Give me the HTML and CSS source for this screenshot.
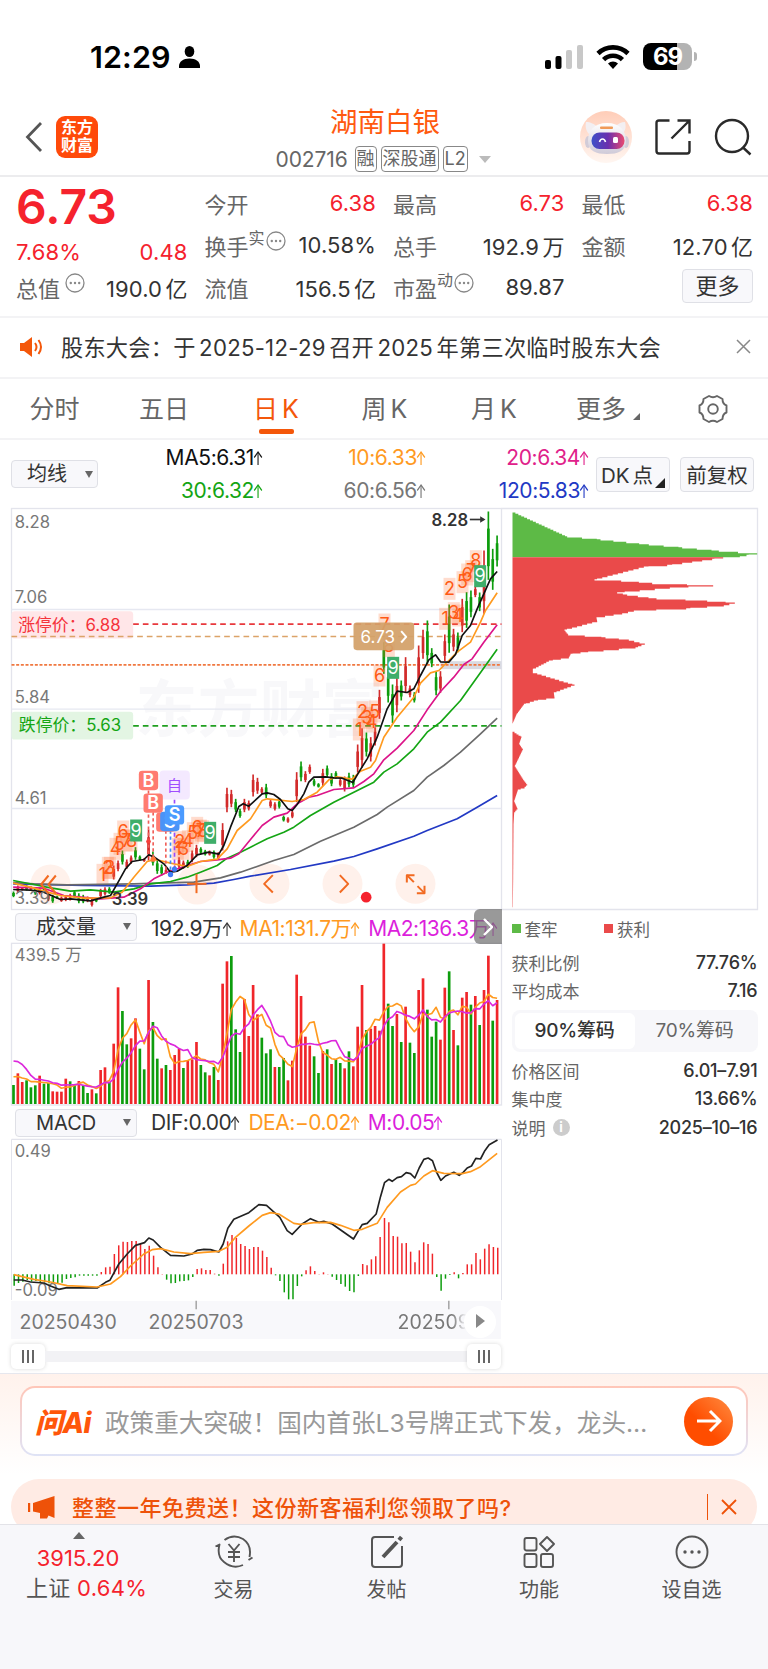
FILE: index.html
```html
<!DOCTYPE html>
<html lang="zh-CN">
<head>
    <meta charset="UTF-8">
    <meta name="viewport" content="width=device-width, initial-scale=1.0">
    <title>湖南白银 002716</title>
    <link rel="stylesheet" href="styles.css">
</head>
<body>
    <div class="status-bar">
        <div class="status-left">
            <span class="time">12:29</span>
            <svg width="21" height="22" viewBox="0 0 21 22"><ellipse cx="10.500" cy="5.500" rx="4.800" ry="5.500"/><path d="M0 22v-2c0-4 4-7.500 10.500-7.500S21 16 21 20v2z"/></svg>
        </div>
        <div class="status-right">
            <svg width="38" height="24" viewBox="0 0 38 24"><rect x="0" y="15" width="6" height="9" rx="2"/><rect x="10.500" y="11" width="6" height="13" rx="2"/><rect x="21" y="5" width="6" height="19" rx="2" fill="#c8c8c8"/><rect x="32" y="0" width="6" height="24" rx="2" fill="#c8c8c8"/></svg>
            <svg width="34" height="25" viewBox="0 0 34 25" fill="none" stroke="#000" stroke-width="4.600"><path d="M2 9.500a21.500 21.500 0 0 1 30 0"/><path d="M7.600 15.600a13.300 13.300 0 0 1 18.800 0"/><path d="M17 25l-5-5.500a7.500 7.500 0 0 1 10 0z" fill="#000" stroke="none"/></svg>
            <div class="battery"><span>69</span></div>
        </div>
    </div>

    <header class="header">
        <div class="header-left">
            <svg class="back" width="18" height="32" viewBox="0 0 18 32"><path d="M16 2L2.500 16 16 30" fill="none" stroke="#555" stroke-width="2.800"/></svg>
            <div class="logo">东方<br>财富</div>
        </div>
        <div class="header-title">
            <h1>湖南白银</h1>
            <div class="code"><span class="code-num">002716</span><span class="tag">融</span><span class="tag">深股通</span><span class="tag">L2</span><i class="caret"></i></div>
        </div>
        <div class="header-right">
            <svg class="robot" width="52" height="52" viewBox="0 0 52 52">
                <defs>
                    <linearGradient id="halo" x1="0" y1="0" x2="0" y2="1"><stop offset="0" stop-color="#ffcdb8"/><stop offset="1" stop-color="#fff6f1"/></linearGradient>
                    <linearGradient id="visor" x1="0" y1="0" x2="1" y2="0"><stop offset="0" stop-color="#3c50c8"/><stop offset=".5" stop-color="#6a2fae"/><stop offset="1" stop-color="#ea4a70"/></linearGradient>
                    <linearGradient id="head" x1="0" y1="0" x2="0" y2="1"><stop offset="0" stop-color="#fff"/><stop offset="1" stop-color="#cfcad8"/></linearGradient>
                </defs>
                <circle cx="26" cy="26" r="26" fill="url(#halo)"/>
                <path d="M6 11c4 0 9 2 11 5l-8 7c-3-3-4-8-3-12zM45 11c-4 0-7 2-9 4l7 7c3-3 3-7 2-11z" fill="#f3eff2"/>
                <ellipse cx="8" cy="31" rx="3" ry="6" fill="#d2ccd8"/><ellipse cx="46" cy="31" rx="3" ry="6" fill="#d2ccd8"/>
                <path d="M8 30c0-10 6-18 19-18s19 8 19 18-8 13-19 13S8 40 8 30z" fill="url(#head)"/>
                <rect x="20" y="15.500" width="13" height="2.500" rx="1" fill="#f09a58"/>
                <rect x="11.500" y="21.500" width="33" height="16.500" rx="8" fill="url(#visor)"/>
                <path d="M19.500 31c1-4 5-4 6 0" fill="none" stroke="#fff" stroke-width="1.600"/>
                <rect x="33" y="26" width="5" height="6" rx="1.500" fill="#fff"/>
            </svg>
            <svg width="36" height="36" viewBox="0 0 36 36" fill="none" stroke="#2a2a2a" stroke-width="2.400"><path d="M14.500 1.500H4Q1.500 1.500 1.500 4v28Q1.500 34.500 4 34.500h28q2.500 0 2.500-2.500V22M16.500 19.500L34 2M22.500 1.500h12v13"/></svg>
            <svg class="search" width="38" height="38" viewBox="0 0 38 38" fill="none" stroke="#2a2a2a" stroke-width="2.400"><circle cx="18" cy="18" r="16"/><path d="M28.500 29l8 7.500"/></svg>
        </div>
    </header>

    <section class="quote">
        <div class="quote-col">
            <div class="price">6.73</div>
            <div class="row change red"><span>7.68%</span><span>0.48</span></div>
            <div class="row"><span class="label">总值<svg class="dots" width="20" height="20" viewBox="0 0 20 20"><use href="#more-dots"/></svg></span><span>190.0 亿</span></div>
        </div>
        <div class="quote-col">
            <div class="row"><span class="label">今开</span><span class="red">6.38</span></div>
            <div class="row"><span class="label">换手<sup>实</sup><svg class="dots tight" width="20" height="20" viewBox="0 0 20 20"><use href="#more-dots"/></svg></span><span>10.58%</span></div>
            <div class="row"><span class="label">流值</span><span>156.5 亿</span></div>
        </div>
        <div class="quote-col">
            <div class="row"><span class="label">最高</span><span class="red">6.73</span></div>
            <div class="row"><span class="label">总手</span><span>192.9 万</span></div>
            <div class="row"><span class="label">市盈<sup>动</sup><svg class="dots tight" width="20" height="20" viewBox="0 0 20 20"><use href="#more-dots"/></svg></span><span>89.87</span></div>
        </div>
        <div class="quote-col">
            <div class="row"><span class="label">最低</span><span class="red">6.38</span></div>
            <div class="row"><span class="label">金额</span><span>12.70 亿</span></div>
            <div class="row more-row"><button class="btn more-btn">更多</button></div>
        </div>
    </section>

    <section class="notice">
        <svg width="23" height="20" viewBox="0 0 23 20"><path d="M0 6h4l8-6v20l-8-6H0z" fill="#f4570a"/><path d="M15 6q3 4 0 8M18.500 3q5 7 0 14" fill="none" stroke="#f4570a" stroke-width="2"/></svg>
        <p>股东大会：于 2025-12-29 召开 2025 年第三次临时股东大会</p>
        <svg width="15" height="15" viewBox="0 0 15 15"><path d="M1 1l13 13M14 1L1 14" stroke="#888" stroke-width="1.500"/></svg>
    </section>

    <nav class="tabs">
        <a>分时</a>
        <a>五日</a>
        <a class="active">日 K</a>
        <a>周 K</a>
        <a>月 K</a>
        <a class="has-corner">更多</a>
        <a class="gear"><svg width="30" height="30" viewBox="0 0 30 30" fill="none" stroke="#666" stroke-width="1.900" stroke-linejoin="round"><path d="M11 2q4 2.600 8 0l5.500 3q0 5 4 6.500v7q-4 1.500-4 6.500L19 28q-4-2.600-8 0l-5.500-3q0-5-4-6.500v-7q4-1.500 4-6.500z"/><circle cx="15" cy="15" r="4.800"/></svg></a>
    </nav>

    <section class="ma-bar">
        <button class="btn select ma-select">均线<i></i></button>
        <div class="ma-grid">
            <span class="c-black">MA5:6.31<b class="up">↑</b></span><span class="c-orange">10:6.33<b class="up">↑</b></span><span class="c-pink">20:6.34<b class="up">↑</b></span>
            <span class="c-green">30:6.32<b class="up">↑</b></span><span class="c-gray">60:6.56<b class="up">↑</b></span><span class="c-blue">120:5.83<b class="up">↑</b></span>
        </div>
        <button class="btn tool dk">DK 点</button>
        <button class="btn tool">前复权</button>
    </section>

    <main class="charts">
        <div class="left">
            <svg class="chart" id="kline" width="491" height="402" viewBox="31.500 22.500 1473 1206"></svg>
            <div class="indicator">
                <button class="btn select ind-select">成交量<i></i></button>
                <span>192.9万<b class="up">↑</b></span><span class="c-orange">MA1:131.7万<b class="up">↑</b></span><span class="c-purple">MA2:136.3万<b class="up">↑</b></span>
                <div class="next"><svg width="10" height="18" viewBox="0 0 10 18"><path d="M1 1l8 8-8 8" fill="none" stroke="#fff" stroke-width="2.400"/></svg></div>
            </div>
            <svg class="chart" id="volume" width="491" height="163" viewBox="31.500 129 1473 489"></svg>
            <div class="indicator">
                <button class="btn select ind-select">MACD<i></i></button>
                <span>DIF:0.00<b class="up">↑</b></span><span class="c-orange">DEA:−0.02<b class="up">↑</b></span><span class="c-purple">M:0.05<b class="up">↑</b></span>
            </div>
            <svg class="chart" id="macd" width="491" height="162" viewBox="31.500 117 1473 486"></svg>
            <div class="dates">
                <span>20250430</span><span>20250703</span><span class="cut">202509</span>
                <div class="play"></div>
            </div>
            <div class="slider"><b></b><div class="track"></div><b></b></div>
        </div>
        <aside class="chips">
            <svg class="chart" id="chips" width="257" height="402" viewBox="1.500 202.500 771 1206"></svg>
            <div class="legend"><span>套牢</span><span class="win">获利</span></div>
            <div class="stat"><span>获利比例</span><em>77.76%</em></div>
            <div class="stat"><span>平均成本</span><em>7.16</em></div>
            <div class="switch"><span class="on">90%筹码</span><span>70%筹码</span></div>
            <div class="stat"><span>价格区间</span><em>6.01–7.91</em></div>
            <div class="stat"><span>集中度</span><em>13.66%</em></div>
            <div class="stat last"><span>说明<i class="info">i</i></span><em>2025–10–16</em></div>
        </aside>
    </main>

    <section class="ai">
        <div class="ask">
            <span class="ask-logo">问Ai</span>
            <p>政策重大突破！国内首张L3号牌正式下发，龙头…</p>
            <div class="go"><svg width="26" height="24" viewBox="0 0 26 24"><path d="M1 12h22M14 2l10 10-10 10" fill="none" stroke="#fff" stroke-width="3"/></svg></div>
        </div>
        <div class="promo">
            <svg width="27" height="23" viewBox="0 0 27 23" fill="#ee5209"><path d="M5 7L26.500 0v22l-6-2.500-1.500 3h-7V17L5 15.500zM0 7h2.200v9H0z"/></svg>
            <p>整整一年免费送！这份新客福利您领取了吗?</p>
            <span class="line"></span>
            <svg width="16" height="16" viewBox="0 0 16 16"><path d="M1 1l14 14M15 1L1 15" stroke="#ee5209" stroke-width="1.800"/></svg>
        </div>
    </section>

    <footer class="tabbar">
        <div class="index">
            <i></i>
            <div class="red">3915.20</div>
            <div>上证 <span class="red">0.64%</span></div>
        </div>
        <div class="item">
            <svg width="40" height="34" viewBox="0 0 40 34" fill="none" stroke="#555" stroke-width="1.900"><path d="M1.500 11.500l4-2q-3 12 4.500 17.500 9 7.500 19 3M10.500 5q9-6.500 18.500-1 9 6 6.500 18M38.500 22.500l-4 2.500M14.500 9l5.500 6.500L25.500 9M20 15.500V27M14 17h12M14 22h12" stroke-linejoin="round"/></svg>
            <span>交易</span>
        </div>
        <div class="item">
            <svg width="34" height="34" viewBox="0 0 34 34" fill="none" stroke="#555" stroke-width="2"><path d="M24 2H5Q2 2 2 5v24q0 3 3 3h24q3 0 3-3V11"/><path d="M13 22L27 7M29 5l2.500-3" stroke-width="4"/></svg>
            <span>发帖</span>
        </div>
        <div class="item">
            <svg width="32" height="34" viewBox="0 0 32 34" fill="none" stroke="#555" stroke-width="1.900"><rect x="1.500" y="3" width="12" height="12.500" rx="2"/><rect x="1.500" y="19" width="12" height="13" rx="2"/><rect x="18" y="19" width="12" height="13" rx="2"/><path d="M24 2l7 7-7 7-7-7z" stroke-linejoin="round"/></svg>
            <span>功能</span>
        </div>
        <div class="item">
            <svg width="34" height="34" viewBox="0 0 34 34"><circle cx="17" cy="17" r="15.500" fill="none" stroke="#555" stroke-width="1.900"/><g fill="#555"><circle cx="10" cy="17" r="1.700"/><circle cx="17" cy="17" r="1.700"/><circle cx="24" cy="17" r="1.700"/></g></svg>
            <span>设自选</span>
        </div>
    </footer>

    <svg class="defs" width="0" height="0">
        <symbol id="more-dots" viewBox="0 0 20 20"><circle cx="10" cy="10" r="9" fill="none" stroke="#888" stroke-width="1.300"/><g fill="#888"><circle cx="5.800" cy="10" r="1.200"/><circle cx="10" cy="10" r="1.200"/><circle cx="14.200" cy="10" r="1.200"/></g></symbol>
    </svg>
    <script src="charts.js"></script>
</body>
</html>
```
FILE: styles.css
```css
* {
    box-sizing: border-box;
}
body {
    margin: 0;
    width: 768px;
    background: #fff;
    color: #333;
    font-family: Inter, "Noto Sans CJK SC", sans-serif;
    font-size: 22px;
}
h1, p {
    margin: 0;
    font-weight: 400;
}
svg {
    display: block;
    flex: none;
}
.defs {
    position: absolute;
}
.red {
    color: #f5222d;
}
.c-black { color: #111; }
.c-orange { color: #ff9a1f; }
.c-pink { color: #e0218a; }
.c-green { color: #14a514; }
.c-gray { color: #777; }
.c-blue { color: #2239c4; }
.c-purple { color: #dc1fdc; }

/* status bar */
.status-bar {
    height: 98px;
    padding: 42px 71px 0 90px;
    display: flex;
    justify-content: space-between;
    align-items: flex-start;
}
.status-left,
.status-right {
    display: flex;
    align-items: center;
    height: 29px;
}
.time {
    width: 89px;
    color: #000;
    font-size: 30.5px;
    font-weight: 600;
    letter-spacing: 0.1px;
}
.status-right {
    gap: 13px;
}
.battery {
    width: 49px;
    height: 27px;
    margin-right: 5px;
    border-radius: 8px;
    background: linear-gradient(90deg, #000 69%, #b3b3b3 69%);
    color: #fff;
    font-size: 24px;
    font-weight: 700;
    line-height: 27px;
    text-align: center;
    letter-spacing: -1px;
    position: relative;
}
.battery::after {
    content: "";
    position: absolute;
    right: -5px;
    top: 9px;
    width: 3px;
    height: 9px;
    border-radius: 0 3px 3px 0;
    background: #b3b3b3;
}

/* header */
.header {
    height: 79px;
    padding: 1px 16px 0 25px;
    display: grid;
    grid-template-columns: 1fr 220px 1fr;
    border-bottom: 2px solid #ececee;
}
.header-left {
    display: flex;
    align-items: center;
    gap: 13px;
}
.logo {
    width: 42px;
    height: 42px;
    border-radius: 9px;
    background: #ff4a0a;
    color: #fff;
    font-size: 16px;
    font-weight: 700;
    line-height: 17.5px;
    padding-top: 3px;
    text-align: center;
}
.header-title {
    text-align: center;
    margin-left: -7px;
}
.header-title h1 {
    color: #ff5a0f;
    font-size: 27.5px;
    line-height: 46px;
    height: 47px;
}
.code {
    display: flex;
    align-items: center;
    height: 26px;
    margin-left: 4px;
    color: #666;
    font-size: 21px;
    white-space: nowrap;
}
.code-num {
    width: 79px;
    text-align: left;
    letter-spacing: -0.1px;
}
.tag {
    height: 26px;
    margin-right: 4px;
    padding: 0 1px;
    border: 1.5px solid #888;
    border-radius: 4px;
    font-size: 18px;
    line-height: 23px;
}
.caret {
    margin-left: 7px;
    border: 6px solid transparent;
    border-top: 7px solid #bbb;
    border-bottom: 0;
}
.header-right {
    display: flex;
    align-items: center;
    justify-content: flex-end;
}
.robot {
    margin-right: 23px;
}
.search {
    margin-left: 23px;
}

/* quote */
.quote {
    height: 141px;
    padding: 5px 15px 0 16px;
    display: grid;
    grid-template-columns: repeat(4, 1fr);
    column-gap: 17px;
    border-bottom: 2px solid #f3f3f5;
}
.row {
    height: 42px;
    display: flex;
    align-items: center;
    justify-content: space-between;
    white-space: nowrap;
    word-spacing: -3px;
    letter-spacing: 0.1px;
}
.price {
    height: 49px;
    color: #f5222d;
    font-size: 48px;
    font-weight: 600;
    line-height: 50px;
}
.row.change {
    height: 35px;
    padding-top: 7px;
}
.row .label {
    display: flex;
    align-items: center;
    color: #666;
    letter-spacing: 0;
}
.row .label sup {
    font-size: 16px;
    line-height: 16px;
    margin-bottom: 14px;
    vertical-align: baseline;
}
.dots {
    margin: 0 0 9px 5px;
}
.dots.tight {
    margin-left: 1px;
}
.btn {
    border: 1.5px solid #dfe0e6;
    border-radius: 4px;
    background: #f8f8fb;
    color: #333;
    font: inherit;
    padding: 0;
}
.more-row {
    justify-content: flex-end;
}
.more-btn {
    width: 71px;
    height: 34px;
    line-height: 30px;
    margin-top: -3px;
}

/* notice */
.notice {
    height: 61px;
    padding: 0 17px 2px 20px;
    display: flex;
    align-items: center;
    border-bottom: 2px solid #f3f3f5;
}
.notice p {
    flex: 1;
    margin: -2px 0 0 18px;
    font-size: 22.2px;
    word-spacing: -3px;
    letter-spacing: 0.25px;
}

/* tabs */
.tabs {
    height: 61px;
    display: grid;
    grid-template-columns: 109px 110px 114px 103px 116px 98px 126px;
    font-size: 25px;
    color: #666;
    border-bottom: 2px solid #f3f3f5;
}
.tabs a {
    position: relative;
    display: flex;
    align-items: center;
    justify-content: center;
    padding-bottom: 4px;
    word-spacing: -3px;
}
.tabs .gear {
    padding-bottom: 0;
}
.tabs .active {
    color: #f4570a;
}
.tabs .active::after {
    content: "";
    position: absolute;
    bottom: 4px;
    width: 35px;
    height: 5px;
    border-radius: 2px;
    background: #f4570a;
}
.has-corner::after {
    content: "";
    position: absolute;
    right: 10px;
    bottom: 18px;
    border-left: 7px solid transparent;
    border-bottom: 7px solid #666;
}

/* moving averages */
.ma-bar {
    height: 68px;
    padding: 0 14px 0 11px;
    display: flex;
    align-items: center;
}
.select {
    flex: none;
    display: flex;
    align-items: center;
    justify-content: space-between;
    height: 28px;
    font-size: 20px;
    line-height: 24px;
}
.select i {
    border: 4.5px solid transparent;
    border-top: 7px solid #666;
    border-bottom: 0;
}
.ma-select {
    width: 87px;
    padding: 0 4px 0 15px;
}
.ma-grid {
    width: 493px;
    display: grid;
    grid-template-columns: 165px 163px 163px;
    grid-auto-rows: 33px;
    align-items: center;
    text-align: right;
    font-size: 21px;
    letter-spacing: -0.4px;
}
.up {
    display: inline-block;
    width: 9px;
    font-size: 19px;
    font-weight: 400;
    text-indent: -4px;
    transform: scaleX(0.7);
}
.tool {
    flex: none;
    width: 74px;
    height: 35px;
    margin-left: 10px;
    font-size: 20.5px;
    word-spacing: -3px;
    position: relative;
}
.dk {
    margin-left: 7px;
    padding-right: 12px;
}
.dk::after {
    content: "";
    position: absolute;
    right: 4px;
    bottom: 3px;
    border-left: 10px solid transparent;
    border-bottom: 10px solid #222;
}

/* charts */
.charts {
    height: 865px;
    display: flex;
    padding-left: 10.5px;
}
.left {
    width: 490px;
}
.chart {
    overflow: visible;
    font-family: Inter, "Noto Sans CJK SC", sans-serif;
}
.indicator {
    height: 33px;
    display: flex;
    align-items: center;
    gap: 8px;
    padding-left: 4.5px;
    position: relative;
    font-size: 21px;
    letter-spacing: -0.45px;
    white-space: nowrap;
}
.ind-select {
    width: 122px;
    margin-right: 6px;
    padding: 0 5px 0 20px;
}
.next {
    position: absolute;
    right: -1px;
    top: -1px;
    width: 28px;
    height: 35px;
    border-radius: 6px 0 0 6px;
    background: rgba(110, 110, 110, 0.7);
    display: flex;
    align-items: center;
    justify-content: center;
}
#macd {
    position: relative;
    z-index: 1;
}
.dates {
    height: 38px;
    position: relative;
    display: flex;
    align-items: center;
    background: #f8f8fb;
    color: #777;
    font-size: 19.5px;
    padding: 4px 0 0 9px;
}
.dates span {
    width: 129px;
}
.dates .cut {
    width: auto;
    margin-left: 120px;
    -webkit-mask-image: linear-gradient(90deg, #000 75%, transparent 95%);
}
.play {
    position: absolute;
    right: 5px;
    top: 5px;
    width: 32px;
    height: 32px;
    border-radius: 50%;
    background: #fff;
}
.play::after {
    content: "";
    position: absolute;
    left: 12px;
    top: 8px;
    border: 7.5px solid transparent;
    border-left: 9px solid #888;
    border-right: 0;
}
.slider {
    display: flex;
    align-items: center;
    margin-top: 5px;
}
.slider b {
    width: 34px;
    height: 25px;
    border-radius: 5px;
    background: linear-gradient(#666, #666) 11px 6px / 2px 13px no-repeat, linear-gradient(#666, #666) 16px 6px / 2px 13px no-repeat, linear-gradient(#666, #666) 21px 6px / 2px 13px no-repeat, #fff;
    box-shadow: 0 0 4px rgba(0, 0, 0, 0.15);
}
.track {
    flex: 1;
    height: 11px;
    background: #f2f2f5;
}
.chips {
    width: 257px;
    color: #666;
    font-size: 17px;
}
.legend {
    display: flex;
    height: 38px;
    align-items: center;
    padding: 0 0 1px 11px;
}
.legend span {
    width: 92.5px;
    display: flex;
    align-items: center;
    gap: 4px;
    font-size: 16.5px;
}
.legend span::before {
    content: "";
    width: 9px;
    height: 9px;
    background: #5dba46;
}
.legend .win::before {
    background: #ea4a4a;
}
.stat {
    height: 28px;
    padding-left: 11px;
    display: flex;
    align-items: center;
    justify-content: space-between;
}
.stat span {
    display: flex;
    align-items: center;
}
.stat em {
    color: #333;
    font-style: normal;
    font-weight: 500;
    font-size: 18px;
    letter-spacing: -0.2px;
}
.switch {
    height: 42px;
    margin: 6px 0 4px 11px;
    padding: 3px;
    border-radius: 8px;
    background: #f7f7fa;
    display: flex;
    font-size: 19px;
    line-height: 35px;
    text-align: center;
    letter-spacing: -0.2px;
}
.switch span {
    flex: 1;
}
.switch .on {
    border-radius: 6px;
    background: #fff;
    color: #333;
    font-weight: 500;
}
.stat.last {
    height: 31px;
}
.info {
    width: 17px;
    height: 17px;
    margin-left: 7px;
    border-radius: 50%;
    background: #ccc;
    color: #fff;
    font-size: 13px;
    font-weight: 700;
    font-style: normal;
    line-height: 17px;
    text-align: center;
}

/* assistant */
.ai {
    height: 151px;
    padding: 12px 11px 0;
    overflow: hidden;
    border-top: 1.5px solid #e6e7ee;
    background: linear-gradient(#fff2ec, #fff 100px);
}
.ask {
    height: 70px;
    margin: 0 9px 23px;
    padding: 0 13px;
    display: flex;
    align-items: center;
    border: 2px solid transparent;
    border-radius: 15px;
    background: linear-gradient(#fff, #fff) padding-box, linear-gradient(#ffc6b8, #dfe3f6) border-box;
}
.ask-logo {
    width: 70px;
    color: #ff560a;
    font-size: 28px;
    font-weight: 800;
    font-style: italic;
    letter-spacing: -0.5px;
}
.ask p {
    flex: 1;
    margin-top: -1px;
    color: #999;
    font-size: 24.6px;
    white-space: nowrap;
}
.go {
    width: 49px;
    height: 49px;
    border-radius: 50%;
    background: linear-gradient(45deg, #ff4d00 40%, #ff8d42);
    display: flex;
    align-items: center;
    justify-content: center;
}
.promo {
    height: 56px;
    border-radius: 28px;
    padding: 0 20px 0 17px;
    background: #ffebe4;
    color: #ee5209;
    display: flex;
    align-items: center;
    font-size: 22px;
}
.promo p {
    flex: 1;
    margin: -3px 0 0 17px;
    font-weight: 500;
    letter-spacing: 0.5px;
}
.promo .line {
    width: 1.5px;
    height: 26px;
    margin-right: 13px;
    background: #ee5209;
}

/* bottom bar */
.tabbar {
    height: 145px;
    padding-top: 7px;
    display: grid;
    grid-template-columns: 157px 153px 153px 152px 153px;
    border-top: 1.5px solid #e3e3e8;
    background: #f7f7fa;
    color: #555;
    text-align: center;
}
.index {
    padding-left: 14px;
    line-height: 30px;
    font-size: 22px;
}
.index > div {
    white-space: nowrap;
    letter-spacing: 0.3px;
    margin-left: 2px;
}
.index > div:first-of-type {
    padding-right: 14px;
    margin: 4px 0 0 -1px;
    letter-spacing: 0;
}
.index i {
    display: block;
    width: 12px;
    margin-left: 59px;
    border: 6px solid transparent;
    border-bottom: 7px solid #666;
    border-top: 0;
}
.item {
    font-size: 20px;
    line-height: 28px;
    display: flex;
    flex-direction: column;
    align-items: center;
    gap: 7px;
    padding-top: 3px;
}
```
FILE: charts.js
```js
const RED = '#d22b2b';
const GREEN = '#0d9d0d';
const STEP = 13.07;

// one letter per day: r = up, g = down
const volumeDays = 'g555 r520 r546 g541 g562 g556 r527 g551 g549 r574 r575 r575 r536 g544 g553 r543 g556 g579 r568 g580 r510 r502 g546 r431 r262 g333 g433 r415 r355 g446 g508 r240 g366 g476 r505 g495 r510 r465 r447 g504 r482 r478 r426 g495 g517 r526 g501 r540 r251 r184 g168 g388 g456 r297 r408 r255 r343 g413 g460 g448 r501 g501 g474 r541 r482 r224 r288 r410 r437 g469 g519 r453 g448 r492 g478 g489 r505 g454 r499 r380 r255 g390 r386 r378 r392 r131 g311 g378 r342 g426 r320 g428 g459 r270 r235 g329 g410 g365 r419 r263 g214 r390 g436 r293 r276 g314 r288 g375 r270 r167 g362 r300'.split(' ');

const candles = 'g1173-1190 r1155-1177 r1160-1170 g1153-1170 r1157-1168 g1160-1183 r1161-1182 g1160-1170 r1178-1202 g1183-1207 g1186-1195 r1188-1204 r1185-1202 r1180-1200 g1170-1192 g1178-1208 g1183-1208 r1188-1205 r1195-1218 g1193-1205 r1165-1192 r1160-1185 g1160-1180 r1095-1137 r1080-1112 g1050-1092 r1077-1105 r1065-1090 g1040-1078 g1065-1080 r1073-1084 r987-1080 g1053-1095 g1078-1120 g1092-1125 r1105-1120 g1108-1122 r1095-1115 r1070-1105 r1080-1105 g1078-1102 r1050-1085 r1033-1070 g1040-1060 g1048-1065 r1050-1065 g1050-1075 r1055-1078 r968-1050 r862-935 r868-920 g895-935 g925-952 r895-935 r900-930 r822-888 r832-880 r860-880 g850-893 r897-922 r905-930 g897-924 g945-963 r950-967 r930-953 r815-905 g783-842 r812-845 r792-820 g835-857 g848-861 r805-857 g795-830 g818-857 g812-835 r833-858 r828-873 g817-860 g823-860 r732-816 r683-802 g696-768 r710-783 r680-735 r568-655 g425-520 g505-606 g552-668 r530-635 g540-600 r470-578 r555-590 g575-606 r435-577 r388-475 g360-490 g443-500 g512-584 r512-577 r402-482 g312-457 r385-452 g396-455 r295-395 g275-382 g270-350 r258-290 g276-332 r150-340 g33-238 g145-268 g105-198'.split(' ');

const macdBars = [557, 549, 545, 540, 545, 543, 547, 547, 550, 552, 552, 548, 537, 534, 532, 527, 527, 527, 527, 527, 516, 502, 500, 462, 436, 425, 426, 423, 423, 432, 447, 437, 467, 502, 522, 539, 550, 549, 544, 543, 541, 531, 507, 505, 510, 510, 521, 527, 491, 424, 405, 414, 432, 438, 447, 441, 441, 452, 471, 503, 526, 543, 577, 598, 598, 558, 529, 511, 499, 513, 522, 517, 522, 530, 540, 552, 560, 573, 577, 528, 492, 496, 478, 469, 411, 354, 367, 408, 410, 430, 429, 455, 487, 451, 427, 432, 461, 531, 572, 536, 525, 517, 535, 519, 493, 493, 459, 478, 446, 433, 441, 443];

const maLines = [
    ['#2239c4', '38,1150 250,1155 450,1157 560,1153 640,1148 700,1137 750,1127 870,1107 1000,1082 1060,1068 1130,1045 1240,1007 1280,990 1370,955 1430,920 1490,885'],
    ['#6b6b6b', '38,1146 100,1150 200,1153 400,1150 500,1147 580,1145 660,1132 720,1115 750,1105 820,1080 880,1062 960,1022 1060,980 1130,942 1160,920 1240,870 1280,830 1330,795 1380,755 1440,700 1490,653'],
    ['#14a514', '38,1140 100,1152 150,1162 210,1172 270,1168 340,1175 400,1165 450,1150 510,1143 560,1130 600,1115 650,1095 680,1073 720,1055 750,1040 800,1015 850,995 880,980 930,945 1000,905 1060,875 1120,845 1150,815 1190,790 1240,745 1280,695 1320,665 1380,600 1430,530 1490,446'],
    ['#dc1489', '38,1160 130,1163 190,1185 300,1195 370,1190 420,1165 460,1135 500,1115 560,1095 600,1083 650,1078 690,1073 715,1060 750,1017 785,975 820,950 860,938 890,910 925,890 950,885 1000,867 1060,862 1090,843 1120,820 1150,778 1190,743 1240,690 1280,628 1320,573 1360,530 1390,492 1415,475 1450,425 1490,373'],
    ['#ff9a1f', '38,1148 90,1160 130,1172 180,1185 250,1193 330,1192 365,1175 400,1130 440,1083 465,1077 510,1088 560,1098 600,1083 650,1076 680,1045 710,990 750,955 785,900 800,895 830,898 875,903 910,897 950,875 985,838 1010,829 1055,836 1080,812 1110,800 1125,780 1150,710 1190,650 1240,590 1260,548 1290,517 1315,510 1345,480 1370,455 1410,425 1440,365 1455,330 1490,277'],
    ['#111', '38,1167 90,1169 130,1175 180,1197 210,1195 270,1201 310,1190 330,1185 350,1150 375,1105 395,1083 430,1077 445,1063 465,1072 490,1090 510,1115 530,1112 560,1095 590,1063 625,1055 655,1061 670,1035 690,980 715,918 728,910 745,917 785,880 800,877 820,882 840,897 862,925 875,930 890,912 910,880 925,845 940,830 975,829 1000,832 1025,833 1057,846 1075,815 1100,775 1130,710 1160,625 1190,572 1220,576 1240,565 1260,525 1285,478 1305,463 1320,484 1345,485 1365,462 1385,405 1410,375 1430,325 1450,280 1470,235 1490,213']
];

// nine-turn counters: digit, x, y
const turns = [
    [1, 306, 1123], [2, 322, 1102], [3, 328, 1102], [4, 345, 1045], [5, 357, 1030], [7, 378, 1020], [8, 393, 1020], [6, 368, 993], [9, 407, 990],
    [1, 532, 1045], [2, 538, 1025], [3, 549, 1045], [4, 562, 1022], [5, 577, 998], [6, 590, 982], [7, 601, 990], [8, 608, 992], [9, 629, 997],
    [1, 1075, 687], [2, 1086, 635], [3, 1100, 652], [4, 1113, 663], [5, 1123, 633], [6, 1137, 525], [7, 1152, 372], [8, 1165, 437], [9, 1178, 502],
    [1, 1334, 355], [2, 1347, 265], [3, 1360, 338], [4, 1373, 345], [5, 1386, 245], [6, 1400, 222], [7, 1412, 212], [8, 1426, 182], [9, 1439, 227]
];

const line = (x1, y1, x2, y2, color, w = 3, dash = '') =>
    `<line x1="${x1}" y1="${y1}" x2="${x2}" y2="${y2}" stroke="${color}" stroke-width="${w}" stroke-dasharray="${dash}"/>`;
const rect = (x, y, w, h, fill, r = 0) =>
    `<rect x="${x}" y="${y}" width="${w}" height="${h}" fill="${fill}" rx="${r}"/>`;
const poly = (points, color, w = 5) =>
    `<polyline points="${points}" fill="none" stroke="${color}" stroke-width="${w}" stroke-linejoin="round"/>`;
const text = (x, y, str, color, size, weight = 400, anchor = 'start') =>
    `<text x="${x}" y="${y + size * 0.35}" fill="${color}" font-size="${size}" font-weight="${weight}" text-anchor="${anchor}">${str}</text>`;
const frame = (x, y, w, h) =>
    `<rect x="${x}" y="${y}" width="${w}" height="${h}" fill="none" stroke="#e3e4ec" stroke-width="4"/>`;

function drawKline() {
    let out = text(405, 630, '东方财富', '#f8f8fa', 186, 700);
    out += frame(33, 24, 1470, 1203);
    [327, 626, 924].forEach(y => out += line(33, y, 1503, y, '#e6e8f1', 4));
    out += rect(1320, 482, 183, 24, '#d9dae2');
    out += rect(33, 332, 365, 82, '#ffe6e8', 10) + rect(33, 634, 365, 83, '#e3f5e3', 10);
    out += line(398, 371, 1503, 371, '#e8383d', 5, '17 12');
    out += line(33, 408, 1503, 408, '#dca368', 5, '17 12');
    out += line(33, 493, 1503, 493, '#f07840', 5, '9 5');
    out += line(398, 676, 1503, 676, '#1f9f1f', 5, '17 12');
    out += text(53, 373, '涨停价：6.88', '#f5333b', 50.5) + text(55, 675, '跌停价：5.63', '#14a514', 50.5);

    [[150, 1152], [590, 1152], [807, 1150], [1026, 1150], [1245, 1150]].forEach(([x, y]) => {
        out += `<circle cx="${x}" cy="${y}" r="60" fill="#fff1eb"/>`;
    });

    candles.forEach((c, i) => {
        const [high, low] = c.slice(1).split('-').map(Number);
        const color = c[0] === 'r' ? RED : GREEN;
        const x = 39 + i * STEP;
        const len = low - high;
        out += line(x, high, x, low, color, 5);
        out += line(x, high + len * 0.25, x, high + len * 0.8, color, 8);
    });

    turns.forEach(([n, x, y]) => {
        const last = n === 9;
        out += rect(x - 18, y - 33, 36, 66, last ? '#3fae6a' : 'rgba(255,110,50,.24)');
        out += text(x, y, n, last ? '#fff' : '#ff5a14', 54, 400, 'middle');
    });
    maLines.forEach(([color, points]) => out += poly(points, color));

    // trade markers
    out += line(444, 870, 444, 1070, '#f0605a', 5, '10 8') + line(458, 935, 458, 1075, '#f0605a', 5, '10 8');
    out += line(496, 990, 496, 1120, '#f0605a', 5, '10 8') + line(510, 990, 510, 1120, '#3f8cf5', 5, '10 8');
    out += line(522, 897, 522, 1110, '#9b4dff', 5, '12 8');
    out += '<circle cx="444" cy="1023" r="7" fill="#f5403a"/><circle cx="458" cy="1076" r="8" fill="#ff7a3a"/><circle cx="510" cy="1122" r="8" fill="#3f7cf5"/><circle cx="522" cy="1106" r="8" fill="#3f7cf5"/>';
    out += rect(477, 810, 91, 87, '#f4e9ff', 12) + text(522, 855, '自', '#a04dff', 46, 400, 'middle');
    [[444, 840, 'B', '#ff7b70'], [458, 908, 'B', '#ff7b70'], [496, 965, 'B', '#ff7b70'], [508, 963, 'S', '#4a93f7'], [522, 943, 'S', '#4a9bff']].forEach(([x, y, s, color]) => {
        out += rect(x - 29, y - 29, 58, 58, color, 10) + text(x, y, s, '#fff', 54, 600, 'middle');
    });

    out += rect(1059, 366, 182, 83, 'rgba(211,160,104,.93)', 10) + text(1080, 410, '6.73', '#fff', 51);
    out += poly('1202,392 1217,409 1202,426', '#fff', 6);

    [['8.28', 64], ['7.06', 290], ['5.84', 590], ['4.61', 892], ['3.39', 1192]].forEach(([s, y]) => {
        out += text(43, y, s, '#777', 50);
    });
    out += text(334, 1196, '3.39', '#333', 50, 600) + text(1293, 58, '8.28', '#333', 50, 600);
    out += line(1408, 57, 1448, 57, '#333', 5) + '<path d="M1455 57l-16-10v20z" fill="#333"/>';

    out += poly('144,1125 122,1152 144,1179', '#f26a21', 6) + poly('166,1125 144,1152 166,1179', '#f26a21', 6);
    out += line(560, 1150, 618, 1150, '#f26a21', 6) + line(588, 1120, 588, 1178, '#f26a21', 6);
    out += poly('817,1124 791,1150 817,1176', '#f26a21', 6) + poly('1018,1124 1043,1150 1018,1176', '#f26a21', 6);
    out += poly('1242,1124 1219,1124 1219,1146', '#f26a21', 6) + line(1219, 1124, 1240, 1145, '#f26a21', 6);
    out += poly('1249,1178 1272,1178 1272,1156', '#f26a21', 6) + line(1272, 1178, 1251, 1157, '#f26a21', 6);
    out += '<circle cx="1097" cy="1190" r="16" fill="#f5222d"/>';
    document.getElementById('kline').innerHTML = out;
}

function drawVolume() {
    const base = 612;
    let out = frame(33, 130, 1470, 485);
    volumeDays.forEach((d, i) => {
        const y = Number(d.slice(1));
        out += rect(35 + i * STEP, y, 8, base - y, d[0] === 'r' ? '#f0262a' : '#0d9d0d');
    });
    // earlier days, needed for the first averages
    const heights = [110, 150, 220, 230, 170, 88, 88, 88, 88].concat(volumeDays.map(d => base - Number(d.slice(1))));
    const average = n => volumeDays.map((d, i) => {
        const sum = heights.slice(i + 10 - n, i + 10).reduce((a, b) => a + b, 0);
        return `${39 + i * STEP},${base - sum / n}`;
    }).join(' ');
    out += poly(average(5), '#ff9a1f') + poly(average(10), '#dc28dc');
    out += text(43, 164, '439.5 万', '#777', 50);
    document.getElementById('volume').innerHTML = out;
}

function drawMacd() {
    let out = line(33, 118, 1503, 118, '#e3e4ec', 4) + line(33, 118, 33, 600, '#e3e4ec') + line(1503, 118, 1503, 600, '#e3e4ec');
    macdBars.forEach((y, i) => {
        const x = 41 + i * STEP;
        out += line(x, 523, x, y, y < 523 ? '#f0262a' : '#0d9d0d', 4.5);
    });
    out += text(43, 152, '0.49', '#777', 50) + text(43, 571, '-0.09', '#777', 50);
    out += poly('40,540 65,540 90,546 130,549 150,558 175,568 200,563 290,564 315,547 328,541 355,492 380,462 405,436 432,428 445,414 458,420 480,442 510,466 550,468 575,462 590,451 610,448 630,449 655,456 668,432 682,385 700,358 745,338 775,314 798,316 838,352 860,392 875,403 905,372 930,356 955,367 970,364 995,372 1059,417 1072,395 1085,374 1100,370 1127,342 1140,290 1152,248 1165,238 1175,244 1190,233 1203,230 1217,218 1230,221 1243,234 1256,204 1270,178 1283,174 1296,182 1308,216 1321,241 1335,228 1360,217 1376,226 1388,217 1400,204 1413,198 1426,175 1440,177 1453,152 1466,134 1491,120', '#222');
    out += poly('40,524 100,538 150,546 200,557 290,561 330,552 360,530 390,498 430,462 455,449 480,446 520,456 570,461 610,457 655,454 680,442 705,412 745,378 785,346 810,338 835,342 880,370 900,373 940,368 990,367 1020,376 1060,391 1085,388 1130,370 1160,322 1200,276 1230,256 1245,252 1270,228 1296,212 1330,220 1385,221 1410,215 1440,200 1490,160', '#ff9a1f');
    out += line(587, 602, 587, 628, '#999', 4) + line(1345, 602, 1345, 628, '#999', 4);
    document.getElementById('macd').innerHTML = out;
}

// cost distribution, stepped outline per group
function drawChips() {
    const groups = [
        ['#5dba46', [[212, 36], [287, 200], [296, 300], [311, 445], [320, 545], [330, 655], [338, 770], [343, 738], [350, 703]]],
        ['#ea4a4a', [[350, 668], [355, 635], [373, 500], [378, 430], [416, 282], [420, 362], [427, 455], [434, 638], [441, 508], [455, 350], [462, 380], [473, 468], [480, 620], [486, 703], [494, 670], [503, 557], [510, 400], [518, 365], [530, 288], [541, 290], [567, 192], [581, 203], [590, 315], [597, 385], [609, 433], [620, 405], [625, 355], [635, 240], [640, 210], [650, 205], [660, 145], [685, 97], [694, 97], [732, 222], [755, 160], [770, 162], [780, 100], [790, 70], [820, 48], [848, 36]]],
        ['#ea4a4a', [[870, 36], [888, 63], [908, 56], [925, 67], [975, 43], [1015, 68], [1031, 80], [1040, 72], [1047, 52], [1080, 41], [1103, 51], [1115, 41], [1150, 39], [1310, 38], [1400, 37]]]
    ];
    let out = '<path d="M3 204H771V1407H3" fill="none" stroke="#e3e4ec" stroke-width="4"/>';
    groups.forEach(([color, pts]) => {
        let d = `M36 ${pts[0][0]}`;
        for (let k = 0; k < pts.length - 1; k++) {
            const [y0, x0] = pts[k];
            const [y1, x1] = pts[k + 1];
            for (let y = y0; y < y1; y += 4) {
                const x = x0 + (x1 - x0) * (y - y0) / (y1 - y0);
                d += `H${x.toFixed(1)}V${Math.min(y + 4, y1)}`;
            }
        }
        out += `<path d="${d}H36z" fill="${color}"/>`;
    });
    document.getElementById('chips').innerHTML = out;
}

drawKline();
drawVolume();
drawMacd();
drawChips();
```
